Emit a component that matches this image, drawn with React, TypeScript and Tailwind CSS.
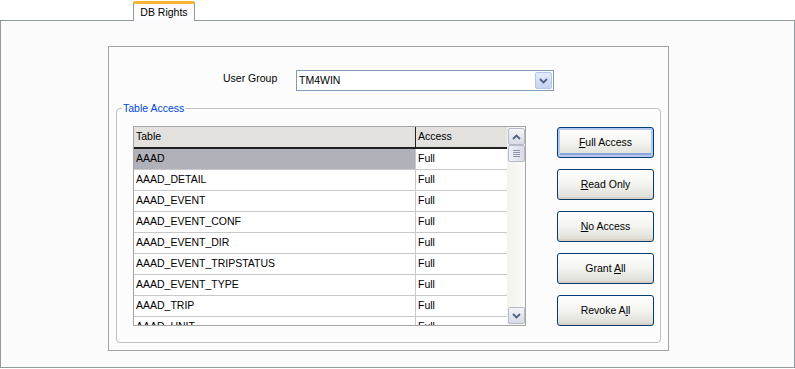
import React from 'react';

const rows = [
  'AAAD',
  'AAAD_DETAIL',
  'AAAD_EVENT',
  'AAAD_EVENT_CONF',
  'AAAD_EVENT_DIR',
  'AAAD_EVENT_TRIPSTATUS',
  'AAAD_EVENT_TYPE',
  'AAAD_TRIP',
  'AAAD_UNIT',
];

const Chevron = ({ up = false }: { up?: boolean }) => (
  <svg width="9" height="6" viewBox="0 0 9 6" className={up ? 'rotate-180' : ''}>
    <path d="M1 1 L4.5 4.5 L8 1" fill="none" stroke="#4d6185" strokeWidth="1.8" />
  </svg>
);

const XpButton = ({ children, focused = false }: { children: React.ReactNode; focused?: boolean }) => (
  <button
    className={`w-[97px] h-[31px] rounded-[3px] border border-[#003c74] bg-gradient-to-b from-[#ffffff] via-[#f3f3ef] to-[#dcdcd6] text-black ${
      focused ? 'shadow-[inset_0_0_0_2px_#b4c8f0,inset_0_-2px_0_2px_#8aa6dc]' : 'shadow-[inset_0_-2px_0_#d6d0c5]'
    }`}
  >
    {children}
  </button>
);

export default function App() {
  return (
    <div
      className="w-[795px] h-[369px] bg-white flex flex-col text-[10.5px] text-black"
      style={{ fontFamily: '"Liberation Sans", Arial, sans-serif' }}
    >
      {/* tab strip */}
      <div className="h-[20px] flex items-end">
        <div className="ml-[133px] w-[62px] h-[20px] -mb-px relative z-10 border-x border-[#919b9c] border-t-[3px] border-t-[#f5b433] bg-[#fcfcfe] flex items-center justify-center rounded-t-[2px]">
          DB Rights
        </div>
      </div>

      {/* outer panel */}
      <div className="w-[795px] h-[348px] border border-[#919b9c] bg-[#fbfbfb]">
        <div className="ml-[107px] mt-[25px] w-[561px] h-[305px] border border-[#a3a3a3] bg-[#fcfcfc]">
          {/* user group row */}
          <div className="mt-[23px] h-[21px] flex items-center">
            <span className="ml-[114px] w-[73px] -mt-[3px]">User Group</span>
            <div className="w-[258px] h-[21px] border border-[#7f9db9] bg-white flex items-center">
              <span className="ml-[2px] mt-px flex-1">TM4WIN</span>
              <div className="w-[17px] h-[17px] mr-px rounded-[2px] border border-[#b3c5ea] bg-gradient-to-b from-[#e6ecfa] to-[#c3d2f0] flex items-center justify-center">
                <Chevron />
              </div>
            </div>
          </div>

          {/* group box */}
          <div className="relative mt-[17px] ml-[7px] w-[545px] h-[235px] border border-[#c0c0bc] rounded-[4px]">
            <span className="absolute -top-[7px] left-[5px] px-[1px] bg-[#fcfcfc] leading-[12px] text-[#0046d5]">
              Table Access
            </span>
            <div className="mt-[17px] ml-[16px] flex gap-[31px]">
              {/* grid */}
              <div className="w-[393px] h-[200px] border border-[#a5a5a5] bg-white flex overflow-hidden">
                <div className="w-[373px] flex flex-col">
                  <div className="h-[22px] flex shrink-0 bg-[#e2e1de] border-b-2 border-[#202020]">
                    <div className="w-[282px] border-r border-[#202020] pl-[2px] flex items-center">Table</div>
                    <div className="flex-1 pl-[2px] flex items-center">Access</div>
                  </div>
                  {rows.map((r, i) => (
                    <div key={r} className="h-[21px] flex shrink-0 border-b border-[#c8c8c8]">
                      <div
                        className={`w-[282px] border-r border-[#c8c8c8] pl-[2px] flex items-center ${
                          i === 0 ? 'bg-[#b1b1b9]' : ''
                        }`}
                      >
                        {r}
                      </div>
                      <div className="flex-1 pl-[2px] flex items-center">Full</div>
                    </div>
                  ))}
                </div>
                {/* scrollbar */}
                <div className="w-[18px] h-full bg-gradient-to-r from-[#f2f2ee] to-[#fafaf8] flex flex-col items-center py-px">
                  <div className="w-[17px] h-[17px] rounded-[2px] border border-[#b6b9c6] bg-gradient-to-b from-[#f4f5f8] to-[#d8dbe6] flex items-center justify-center">
                    <Chevron up />
                  </div>
                  <div className="w-[17px] h-[17px] rounded-[2px] border border-[#b6b9c6] bg-gradient-to-r from-[#eef0f6] to-[#d9dce8] flex flex-col items-center justify-center gap-[1px]">
                    <div className="w-[7px] h-px bg-[#8f95a8]" />
                    <div className="w-[7px] h-px bg-[#8f95a8]" />
                    <div className="w-[7px] h-px bg-[#8f95a8]" />
                    <div className="w-[7px] h-px bg-[#8f95a8]" />
                  </div>
                  <div className="flex-1" />
                  <div className="w-[17px] h-[17px] rounded-[2px] border border-[#b6b9c6] bg-gradient-to-b from-[#f4f5f8] to-[#d8dbe6] flex items-center justify-center">
                    <Chevron />
                  </div>
                </div>
              </div>

              {/* buttons */}
              <div className="mt-px flex flex-col gap-[11px]">
                <XpButton focused>
                  <u>F</u>ull Access
                </XpButton>
                <XpButton>
                  <u>R</u>ead Only
                </XpButton>
                <XpButton>
                  <u>N</u>o Access
                </XpButton>
                <XpButton>
                  Grant <u>A</u>ll
                </XpButton>
                <XpButton>
                  Revoke A<u>l</u>l
                </XpButton>
              </div>
            </div>
          </div>
        </div>
      </div>
    </div>
  );
}
